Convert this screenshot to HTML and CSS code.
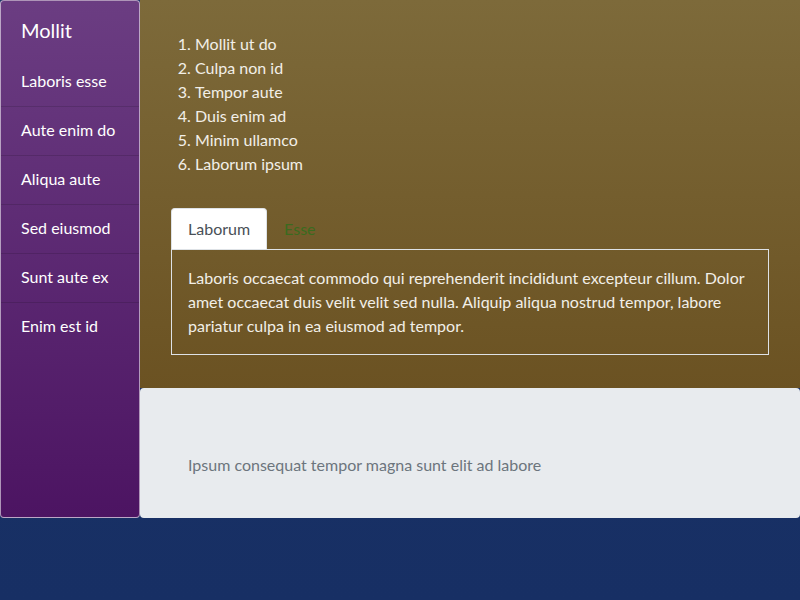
FILE: index.html
```html
<!DOCTYPE html>
<html lang="en">
<head>
<meta charset="utf-8">
<title>Mollit</title>
<link rel="stylesheet" href="styles.css">
</head>
<body>
<div class="layout">
  <nav class="sidebar">
    <div class="brand">Mollit</div>
    <ul class="nav">
      <li class="nav-item">Laboris esse</li>
      <li class="nav-item">Aute enim do</li>
      <li class="nav-item">Aliqua aute</li>
      <li class="nav-item">Sed eiusmod</li>
      <li class="nav-item">Sunt aute ex</li>
      <li class="nav-item">Enim est id</li>
    </ul>
  </nav>
  <div class="main">
    <section class="content">
      <ol class="list">
        <li>Mollit ut do</li>
        <li>Culpa non id</li>
        <li>Tempor aute</li>
        <li>Duis enim ad</li>
        <li>Minim ullamco</li>
        <li>Laborum ipsum</li>
      </ol>
      <div class="tabs">
        <span class="tab active">Laborum</span>
        <span class="tab">Esse</span>
      </div>
      <div class="tab-panel">Laboris occaecat commodo qui reprehenderit incididunt excepteur cillum. Dolor amet occaecat duis velit velit sed nulla. Aliquip aliqua nostrud tempor, labore pariatur culpa in ea eiusmod ad tempor.</div>
    </section>
    <section class="footer-panel">
      <p class="muted">Ipsum consequat tempor magna sunt elit ad labore</p>
    </section>
  </div>
</div>
</body>
</html>
```
FILE: styles.css
```css
* { box-sizing: border-box; }
html, body { margin: 0; padding: 0; }
body {
  background: linear-gradient(#1c3567, #172f64);
  min-height: 600px;
  font-family: Lato, "Liberation Sans", sans-serif;
  font-size: 16px;
  line-height: 24px;
  color: #f2efe8;
}
.layout {
  display: flex;
}
.sidebar {
  width: 140px;
  flex: none;
  background: linear-gradient(#6b3d82, #4c1462);
  border: 1px solid rgba(255, 255, 255, 0.55);
  border-radius: 4px;
  color: #fff;
}
.brand {
  font-size: 20px;
  line-height: 24px;
  padding: 17px 20px 16px;
}
.nav {
  list-style: none;
  margin: 0;
  padding: 0;
}
.nav-item {
  padding: 11px 20px 13px;
  font-size: 16px;
  line-height: 24px;
  border-bottom: 1px solid rgba(0, 0, 0, 0.13);
}
.nav-item:last-child { border-bottom: none; }
.main {
  flex: 1;
  display: flex;
  flex-direction: column;
}
.content {
  background: linear-gradient(#7d6a3a, #6b5222);
  padding: 32px 31px 33px;
}
.list {
  margin: 0 0 32px;
  padding-left: 24px;
}
.tabs {
  display: flex;
  border-bottom: 1px solid #dee2e6;
}
.tab {
  padding: 8px 16px;
  border: 1px solid transparent;
  border-bottom: none;
  border-radius: 4px 4px 0 0;
  color: #3a6b1f;
}
.tab.active {
  background: #fff;
  border-color: #dee2e6;
  color: #495057;
}
.tab-panel {
  border: 1px solid #dee2e6;
  border-top: none;
  padding: 16px;
}
.footer-panel {
  background: #e8ebee;
  border-radius: 4px;
  padding: 65px 48px 41px;
}
.muted {
  margin: 0;
  color: #6c757d;
}
```
